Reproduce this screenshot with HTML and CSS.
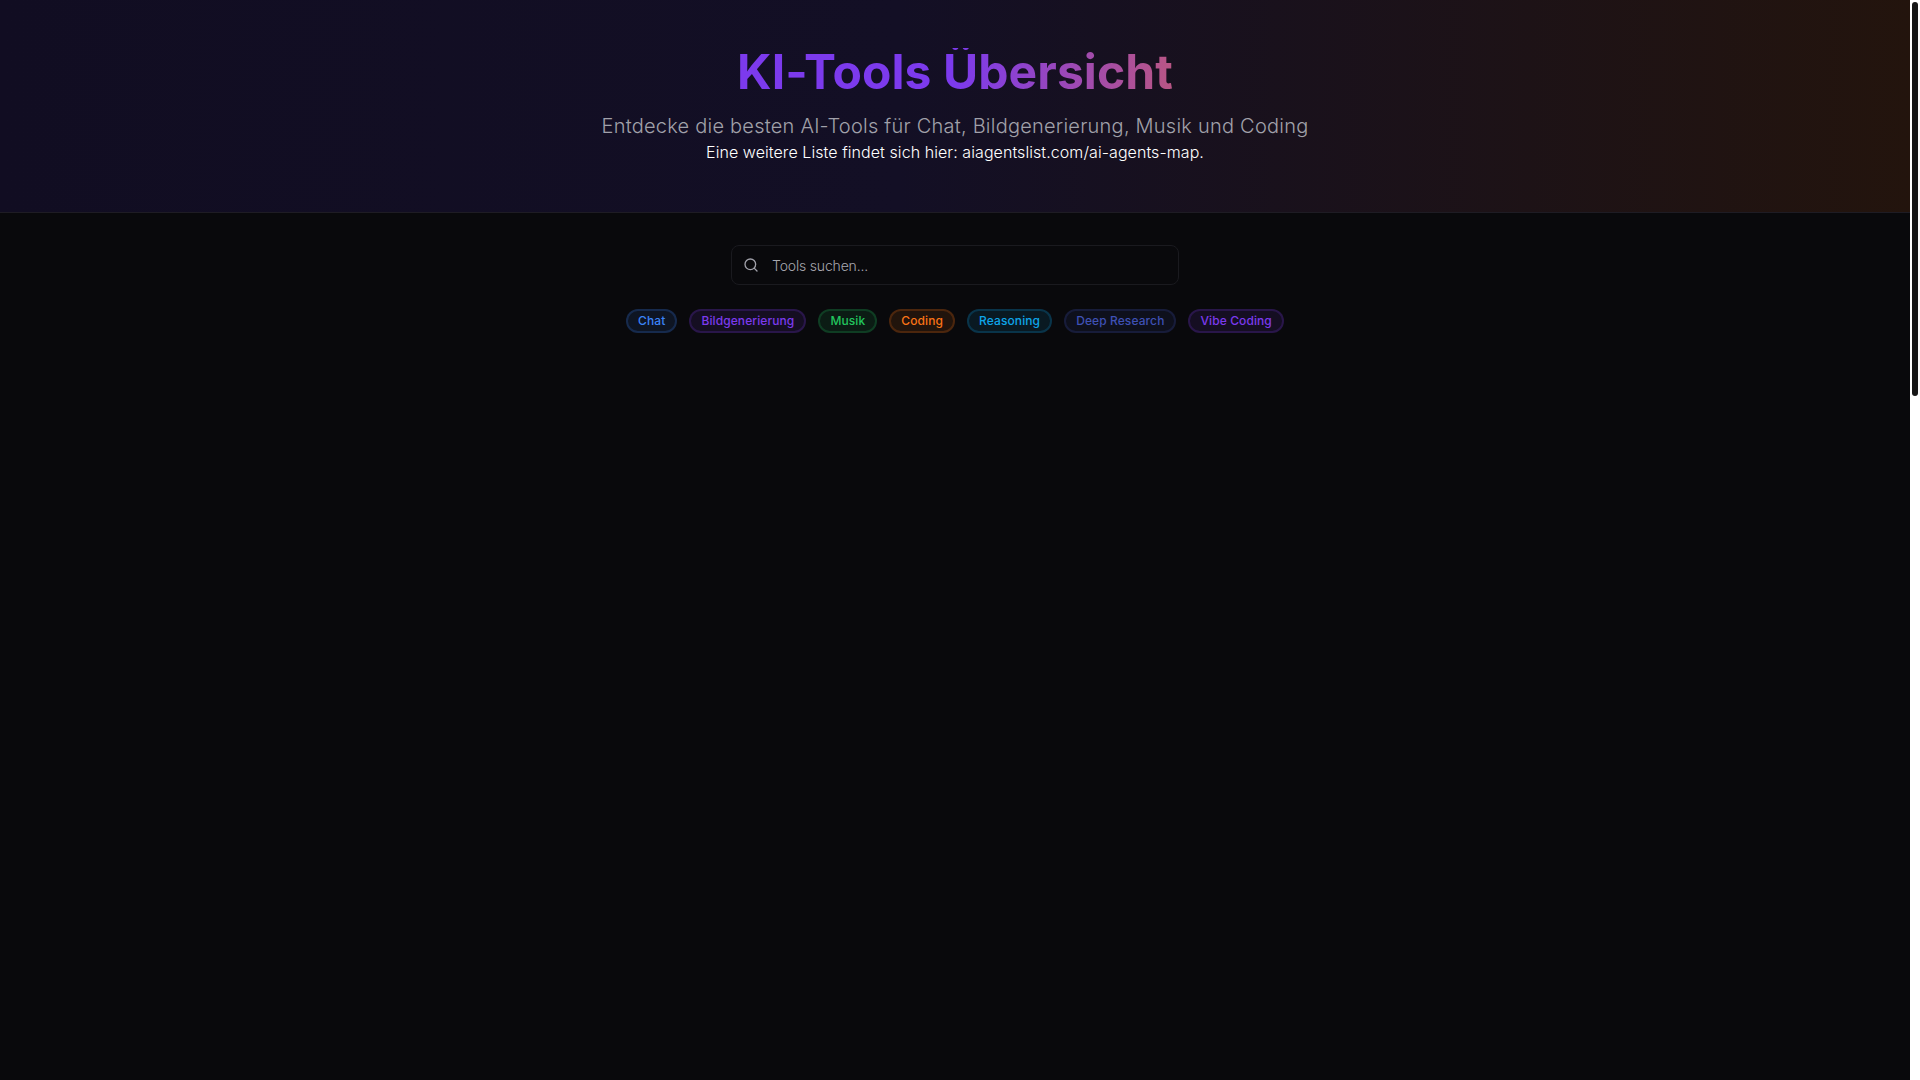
FILE: index.html
```html
<!DOCTYPE html>
<html lang="de">
<head>
<meta charset="utf-8">
<title>KI-Tools Übersicht</title>
<link rel="stylesheet" href="styles.css">
</head>
<body>
<div class="page">
  <header class="hero">
    <div class="hero-inner">
      <h1 class="title">KI-Tools Übersicht</h1>
      <p class="subtitle">Entdecke die besten AI-Tools für Chat, Bildgenerierung, Musik und Coding</p>
      <p class="note">Eine weitere Liste findet sich hier: <a class="note-link" href="#">aiagentslist.com/ai-agents-map</a>.</p>
    </div>
  </header>
  <main class="content">
    <div class="search">
      <svg class="search-icon" viewBox="0 0 24 24" width="16" height="16" fill="none" stroke="currentColor" stroke-width="2" stroke-linecap="round" stroke-linejoin="round"><circle cx="11" cy="11" r="8"/><path d="m21 21-4.3-4.3"/></svg>
      <input class="search-input" type="text" placeholder="Tools suchen...">
    </div>
    <div class="filters">
      <button class="pill pill-blue">Chat</button>
      <button class="pill pill-violet">Bildgenerierung</button>
      <button class="pill pill-green">Musik</button>
      <button class="pill pill-orange">Coding</button>
      <button class="pill pill-sky">Reasoning</button>
      <button class="pill pill-indigo">Deep Research</button>
      <button class="pill pill-violet">Vibe Coding</button>
    </div>
  </main>
</div>
<div class="scroll-rail"><div class="scroll-thumb"></div></div>
</body>
</html>
```
FILE: styles.css
```css
* { box-sizing: border-box; }
html, body { height: 100%; }
body {
  display: flex;
  margin: 0;
  overflow: hidden;
  background: #09090c;
  color: #fff;
  font-family: Inter, "Liberation Sans", sans-serif;
}
.page { flex: 1; min-width: 0; }
.scroll-rail { flex: none; width: 10px; padding: 2px; background: #fff; }
.scroll-thumb { height: 394px; border-radius: 3px; background: #161616; }
.hero {
  padding: 48px 16px;
  border-bottom: 1px solid #1e1c24;
  background: linear-gradient(to right, #110d22 0%, #130f25 47%, #23140d 100%);
}
.hero-inner { max-width: 896px; margin: 0 auto; text-align: center; }
.title {
  margin: 0 0 16px;
  font-size: 48px;
  line-height: 1;
  font-weight: 700;
  letter-spacing: .08px;
  background: linear-gradient(to right, #7c3aed 50%, #f97316 100%);
  -webkit-background-clip: text;
  background-clip: text;
  color: transparent;
}
.subtitle { margin: 0; font-size: 20px; line-height: 28px; font-weight: 300; letter-spacing: .23px; color: #a1a1aa; }
.note { margin: 0; font-size: 16px; line-height: 24px; font-weight: 300; letter-spacing: .07px; color: #fff; }
.note-link { color: inherit; text-decoration: none; }
.content { padding: 32px 16px; }
.search { position: relative; width: 448px; margin: 0 auto 24px; }
.search-icon { position: absolute; left: 12px; top: 12px; color: #a1a1aa; }
.search-input {
  display: block;
  width: 100%;
  height: 40px;
  padding: 0 12px 0 40px;
  border: 1px solid #1a1a1f;
  border-radius: 8px;
  background: #09090c;
  color: #fff;
  font: 300 14px Inter, "Liberation Sans", sans-serif;
  letter-spacing: -.17px;
  outline: none;
}
.search-input::placeholder { color: #a8a8b0; opacity: 1; }
.filters { display: flex; justify-content: center; gap: 12px; }
.pill {
  height: 24px;
  padding: 0 10px;
  border: 2px solid;
  border-radius: 999px;
  font: 500 12px/20px Inter, "Liberation Sans", sans-serif;
  letter-spacing: .1px;
}
.pill-blue { color: #3b82f6; background: rgba(59,130,246,.1); border-color: rgba(59,130,246,.2); }
.pill-violet { color: #7c3aed; background: rgba(124,58,237,.1); border-color: rgba(124,58,237,.2); }
.pill-green { color: #22c55e; background: rgba(34,197,94,.1); border-color: rgba(34,197,94,.2); }
.pill-orange { color: #f97316; background: rgba(249,115,22,.1); border-color: rgba(249,115,22,.2); }
.pill-sky { color: #0ea5e9; background: rgba(14,165,233,.1); border-color: rgba(14,165,233,.2); }
.pill-indigo { color: #3f51b5; background: rgba(63,81,181,.1); border-color: rgba(63,81,181,.2); }
```
